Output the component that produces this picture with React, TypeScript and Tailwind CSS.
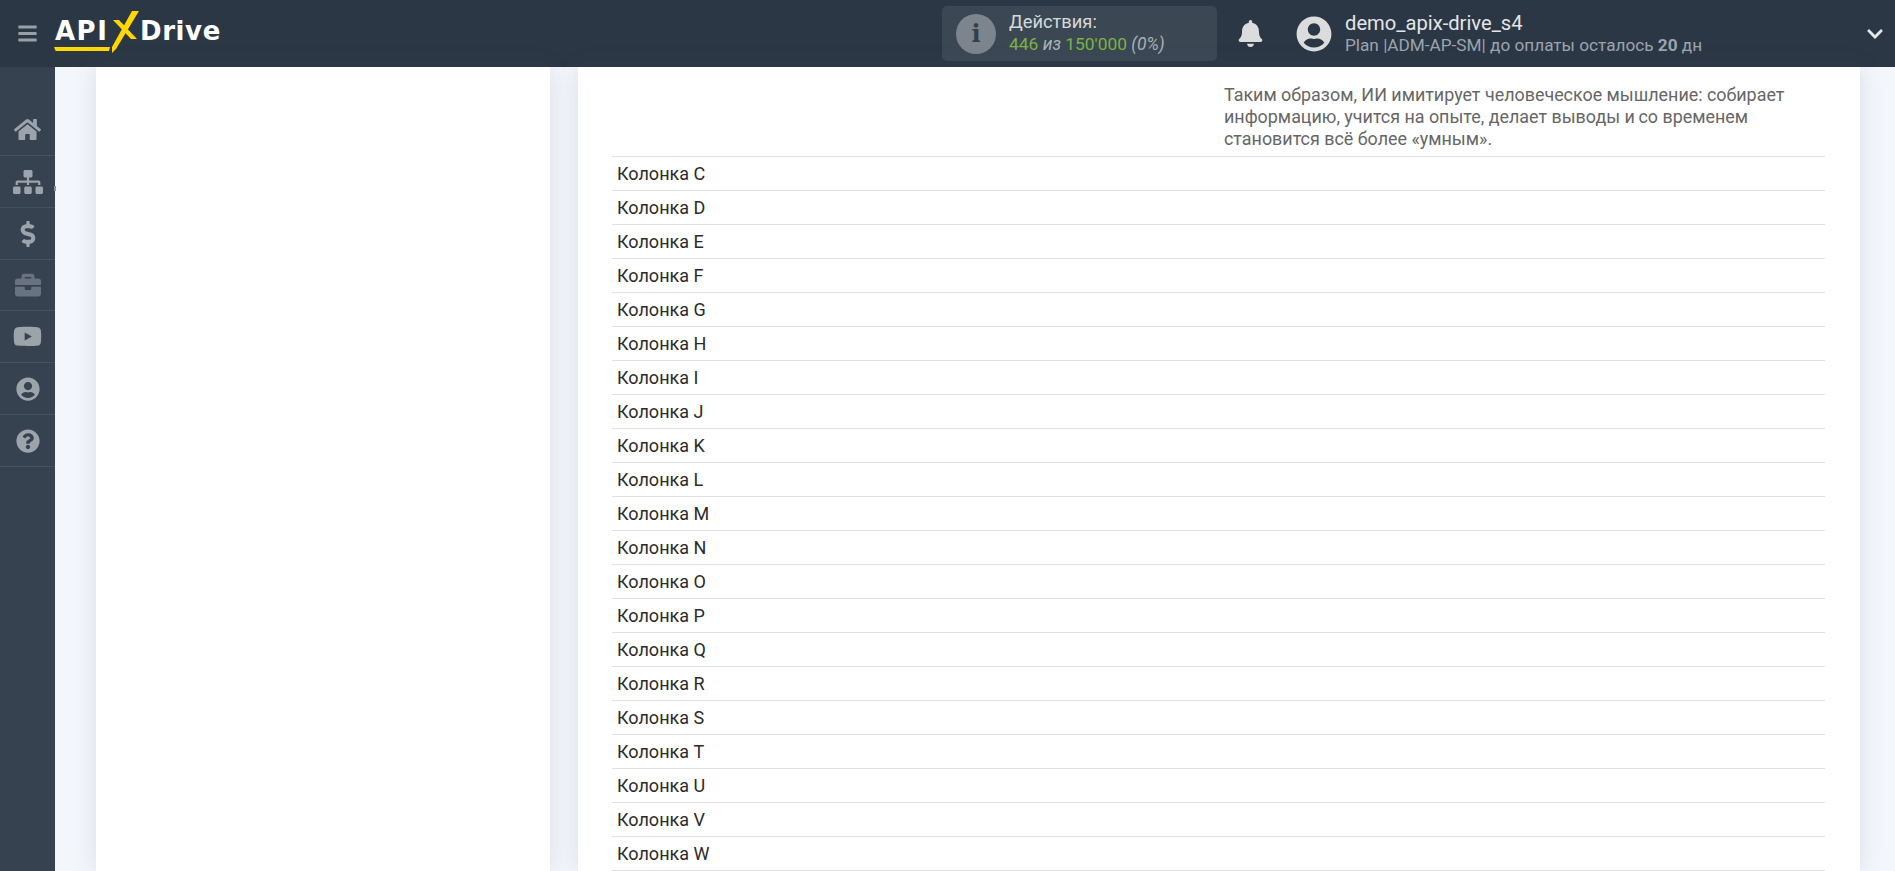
import React from "react";
import {
  FaBars,
  FaBell,
  FaBriefcase,
  FaChevronDown,
  FaDollarSign,
  FaHome,
  FaQuestionCircle,
  FaSitemap,
  FaUserCircle,
  FaYoutube,
} from "react-icons/fa";

const columns = "CDEFGHIJKLMNOPQRSTUVW".split("");

const description =
  "Таким образом, ИИ имитирует человеческое мышление: собирает информацию, учится на опыте, делает выводы и\u2009со временем становится всё более «умным».";

const menu = [
  { icon: FaHome, size: "text-[27px]", tone: "text-[#9ca3ab]", row: "h-[52px]" },
  { icon: FaSitemap, size: "text-[30px]", tone: "text-[#9ca3ab]", row: "h-[52px]" },
  { icon: FaDollarSign, size: "text-[26px]", tone: "text-[#9ca3ab]", row: "h-[52px]" },
  { icon: FaBriefcase, size: "text-[26px]", tone: "text-[#69737f]", row: "h-[51px]" },
  { icon: FaYoutube, size: "text-[29px]", tone: "text-[#9ca3ab]", row: "h-[52px]" },
  { icon: FaUserCircle, size: "text-[24px]", tone: "text-[#9ca3ab]", row: "h-[52px]" },
  { icon: FaQuestionCircle, size: "text-[24px]", tone: "text-[#9ca3ab]", row: "h-[52px]" },
];

const Logo = () => (
  <div className="relative ml-[17px] flex h-[67px] w-[170px] items-center font-['DejaVu_Sans',sans-serif] text-[26px] font-bold text-white">
    <span className="mt-[-5px] w-[56px] tracking-[1.5px]">API</span>
    <svg viewBox="0 0 32 44" className="absolute left-[56px] top-[10px] h-[44px] w-[32px]">
      <polygon points="21,1 28,1 5,39 1,43 1,37" fill="#ffd800" />
      <polygon points="2,10 8,10 26,29 20,29" fill="#ffd800" />
    </svg>
    <span className="ml-[29px] mt-[-5px] tracking-[0.6px]">Drive</span>
    <div className="absolute left-[-1px] top-[47px] h-[4px] w-[56px] bg-[#ffd800] [clip-path:polygon(0_0,100%_0,98%_100%,3%_100%)]" />
  </div>
);

const Header = () => (
  <header className="flex h-[67px] shrink-0 items-center bg-[#2c3745] font-['Roboto',sans-serif]">
    <button className="ml-[17px] text-[21px] text-[#9a9fa6]">
      <FaBars />
    </button>
    <Logo />
    <div className="ml-[717px] flex h-[55px] w-[275px] items-center rounded-[5px] bg-[#3b4853] pl-[14px]">
      <div className="flex h-10 w-10 items-center justify-center rounded-full bg-[#7c858d]">
        <span className="font-['DejaVu_Serif',serif] text-[24px] font-bold leading-none text-[#323e4a]">i</span>
      </div>
      <div className="ml-[13px] mt-[-2px] leading-[23px]">
        <div className="text-[18.3px] text-[#d6d9dc]">Действия:</div>
        <div className="text-[17.4px] text-[#7cb342]">
          446 <em className="text-[#aab1b7]">из</em> 150'000 <em className="text-[#aab1b7]">(0%)</em>
        </div>
      </div>
    </div>
    <FaBell className="ml-[20px] text-[27px] text-[#dcdcdc]" />
    <FaUserCircle className="ml-[32px] text-[36px] text-[#dcdcdc]" />
    <div className="ml-[13px] leading-[22px]">
      <div className="text-[20.2px] text-[#e3e5e7]">demo_apix-drive_s4</div>
      <div className="text-[17.2px] text-[#9ca5ad]">
        Plan |ADM-AP-SM| до оплаты осталось <b>20</b> дн
      </div>
    </div>
    <FaChevronDown className="ml-auto mr-[11px] text-[18px] text-[#e4e6e8]" />
  </header>
);

const Sidebar = () => (
  <aside className="relative flex w-[55px] shrink-0 flex-col bg-[#36424f] pt-[37px]">
    {menu.map((item, i) => {
      const Icon = item.icon;
      return (
        <div key={i} className={`flex items-center justify-center border-b border-[#47525e] ${item.row}`}>
          <Icon className={`${item.size} ${item.tone}`} />
        </div>
      );
    })}
    <div className="absolute right-[-1px] top-[119px] h-[5px] w-[2px] bg-[#8a929a]" />
  </aside>
);

export default function App() {
  return (
    <div className="flex h-screen flex-col overflow-hidden bg-[#f3f6fb] font-['Roboto',sans-serif]">
      <Header />
      <div className="flex min-h-0 flex-1">
        <Sidebar />
        <main className="flex flex-1 gap-[28px] pl-[41px] pr-[35px]">
          <div className="w-[454px] bg-white shadow-[0_0_22px_rgba(80,90,110,0.14)]" />
          <div className="flex-1 bg-white pl-[34px] pr-[35px] shadow-[0_0_22px_rgba(80,90,110,0.14)]">
            <div className="flex h-[90px] justify-end border-b border-[#e0e0e0]">
              <p className="w-[601px] pt-[17px] text-[17.9px] leading-[22px] text-[#666]">{description}</p>
            </div>
            {columns.map((c) => (
              <div key={c} className="flex h-[34px] items-center border-b border-[#e0e0e0] pl-[5px] text-[18px] text-[#2b2b2b]">
                Колонка {c}
              </div>
            ))}
          </div>
        </main>
      </div>
    </div>
  );
}
